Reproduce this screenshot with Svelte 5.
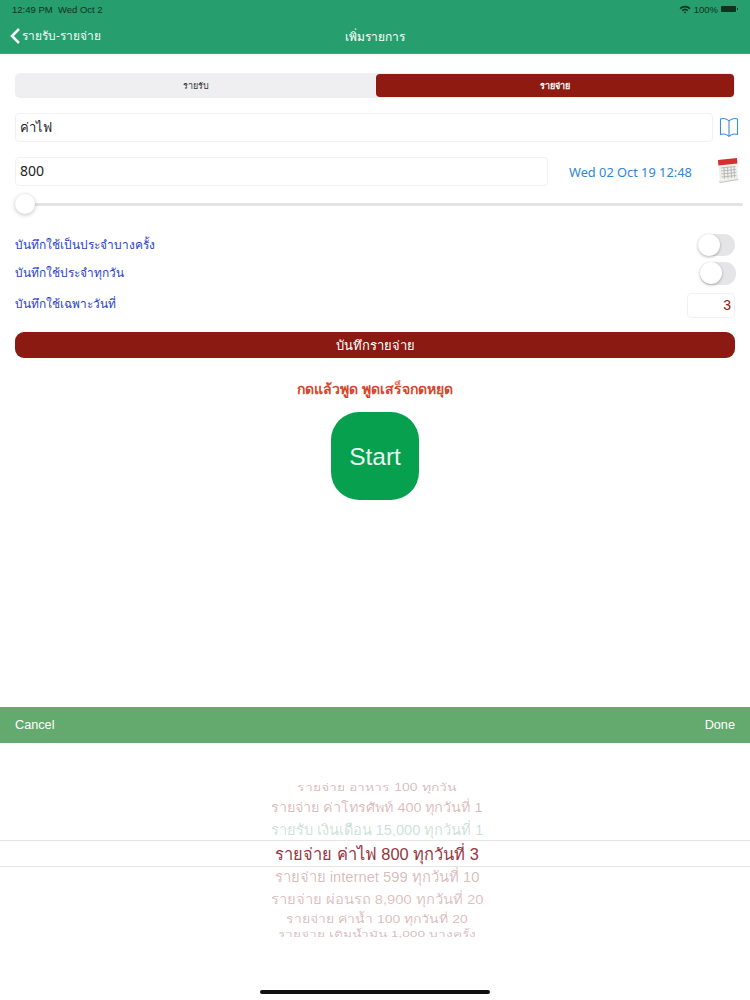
<script>
	let tab = $state('expense');

	const pickerRows = [
		{ text: 'รายจ่าย อาหาร 100 ทุกวัน', size: 14, squash: 0.75, tone: 'rgba(140, 30, 40, 0.32)', height: 16 },
		{ text: 'รายจ่าย ค่าโทรศัพท์ 400 ทุกวันที่ 1', size: 14.4, squash: 0.92, tone: 'rgba(140, 30, 40, 0.32)', height: 23 },
		{ text: 'รายรับ เงินเดือน 15,000 ทุกวันที่ 1', size: 14.6, squash: 1, tone: 'rgba(30, 120, 80, 0.24)', height: 22 },
		{ text: 'รายจ่าย ค่าไฟ 800 ทุกวันที่ 3', size: 16.4, squash: 1, tone: '#963540', height: 25 },
		{ text: 'รายจ่าย internet 599 ทุกวันที่ 10', size: 14.8, squash: 1, tone: 'rgba(140, 30, 40, 0.32)', height: 20 },
		{ text: 'รายจ่าย ผ่อนรถ 8,900 ทุกวันที่ 20', size: 14.8, squash: 0.92, tone: 'rgba(140, 30, 40, 0.3)', height: 24 },
		{ text: 'รายจ่าย ค่าน้ำ 100 ทุกวันที่ 20', size: 14, squash: 0.8, tone: 'rgba(140, 30, 40, 0.32)', height: 16 },
		{ text: 'รายจ่าย เติมน้ำมัน 1,000 บางครั้ง', size: 13.8, squash: 0.6, tone: 'rgba(140, 30, 40, 0.32)', height: 14 }
	];
</script>

<div class="screen">
	<header class="topbar">
		<div class="status">
			<span>12:49 PM &nbsp;Wed Oct 2</span>
			<span class="status-right">
				<svg width="12" height="9" viewBox="0 0 12 9" aria-hidden="true">
					<path d="M0.5 3 A8 8 0 0 1 11.5 3 L10.4 4.2 A6.4 6.4 0 0 0 1.6 4.2 Z" fill="#10311f" />
					<path d="M2.6 5.1 A5 5 0 0 1 9.4 5.1 L8.3 6.2 A3.4 3.4 0 0 0 3.7 6.2 Z" fill="#10311f" />
					<path d="M4.7 7.1 A2 2 0 0 1 7.3 7.1 L6 8.6 Z" fill="#10311f" />
				</svg>
				<span>100%</span>
				<span class="battery"></span>
			</span>
		</div>
		<nav class="navrow">
			<span class="back">
				<svg width="12" height="18" viewBox="0 0 12 18" aria-hidden="true">
					<path d="M10 2 L3 9 L10 16" fill="none" stroke="#fff" stroke-width="2.6" />
				</svg>
				รายรับ-รายจ่าย
			</span>
			<span class="title">เพิ่มรายการ</span>
		</nav>
	</header>

	<main class="form">
		<div class="segment">
			<button class:active={tab === 'income'} onclick={() => (tab = 'income')}>รายรับ</button>
			<button class:active={tab === 'expense'} onclick={() => (tab = 'expense')}>รายจ่าย</button>
		</div>

		<div class="name-row">
			<div class="field grow">ค่าไฟ</div>
			<svg class="book" width="20" height="21" viewBox="0 0 20 21" aria-hidden="true">
				<path d="M10 4 C8 1.5 4 1 1.5 2 V17.5 C4 16.5 8 17 10 19.5 C12 17 16 16.5 18.5 17.5 V2 C16 1 12 1.5 10 4 Z M10 4 V19.5" fill="none" stroke="#3f8fd6" stroke-width="1.1" />
			</svg>
		</div>

		<div class="amount-row">
			<div class="field amount">800</div>
			<span class="date">Wed 02 Oct 19 12:48</span>
			<svg class="calendar" width="22" height="26" viewBox="0 0 22 26" aria-hidden="true">
				<path d="M2 24 L21 21.5 L21.5 23 L3 26 Z" fill="#c4c4c4" />
				<path d="M1 3 L20 1 L21 22 L3 25 Z" fill="#efefed" />
				<path d="M1 3 L20 1 L20.3 6.5 L1.4 8.5 Z" fill="#d3302e" />
				<path d="M4 11 L18.5 9.5 M4 14 L19 12.5 M4.2 17 L19.2 15.5 M4.4 20 L19.4 18.5 M7 10.5 L7.5 22 M10.5 10 L11 21.5 M14 9.5 L14.5 21 M17 9.5 L17.5 20.5" stroke="#a8a8a8" stroke-width="0.7" fill="none" />
			</svg>
		</div>

		<div class="slider">
			<span class="thumb"></span>
		</div>

		<div class="options">
			<div class="option first">
				<span class="label">บันทึกใช้เป็นประจำบางครั้ง</span>
				<span class="switch"><span class="knob"></span></span>
			</div>
			<div class="option second">
				<span class="label">บันทึกใช้ประจำทุกวัน</span>
				<span class="switch nudged"><span class="knob"></span></span>
			</div>
			<div class="option third">
				<span class="label raised">บันทึกใช้เฉพาะวันที่</span>
				<span class="day">3</span>
			</div>
		</div>

		<button class="save">บันทึกรายจ่าย</button>
		<p class="hint">กดแล้วพูด พูดเสร็จกดหยุด</p>
		<button class="start">Start</button>
	</main>

	<div class="sheet-bar">
		<span>Cancel</span>
		<span>Done</span>
	</div>

	<section class="picker">
		<div class="wheel">
			{#each pickerRows as row, i}
				<div class="wheel-row" class:selected={i === 3} style="height: {row.height}px">
					<span style="font-size: {row.size}px; color: {row.tone}; transform: scaleY({row.squash})">{row.text}</span>
				</div>
			{/each}
		</div>
	</section>

	<div class="home-bar"></div>
</div>

<style>
	:global(body) {
		margin: 0;
		background: #fff;
	}

	.screen {
		width: 750px;
		height: 1000px;
		position: relative;
		overflow: hidden;
		display: flex;
		flex-direction: column;
		font-family: "Noto Sans", "DejaVu Sans", "Liberation Sans", sans-serif;
	}

	button {
		font-family: inherit;
		border: none;
		padding: 0;
	}

	.topbar {
		height: 54px;
		flex: none;
		background: #279e6d;
		border-bottom: 1px solid #4f9f78;
		box-sizing: border-box;
		color: #fff;
	}

	.status {
		height: 19px;
		padding: 0 12px 1px;
		box-sizing: border-box;
		display: flex;
		justify-content: space-between;
		align-items: center;
		font-family: "Liberation Sans", sans-serif;
		font-size: 9.5px;
		color: #10311f;
	}

	.status-right {
		display: flex;
		align-items: center;
		gap: 3px;
	}

	.battery {
		position: relative;
		width: 15px;
		height: 6px;
		margin-right: 2px;
		background: #10311f;
		border-radius: 1px;
	}

	.battery::after {
		content: "";
		position: absolute;
		right: -2px;
		top: 2px;
		width: 1px;
		height: 2px;
		background: #10311f;
	}

	.navrow {
		height: 34px;
		position: relative;
		display: flex;
		align-items: center;
		justify-content: center;
		font-size: 12px;
	}

	.back {
		position: absolute;
		left: 9px;
		top: 8px;
		display: flex;
		align-items: center;
		gap: 1px;
		line-height: 18px;
		opacity: 0.95;
	}

	.title {
		font-weight: 500;
	}

	.form {
		height: 653px;
		flex: none;
		box-sizing: border-box;
		padding: 19px 15px 0;
		display: flex;
		flex-direction: column;
	}

	.segment {
		height: 25px;
		flex: none;
		display: grid;
		grid-template-columns: 1fr 1fr;
		background: #efeff2;
		border-radius: 5px;
		padding: 1px;
		box-sizing: border-box;
	}

	.segment button {
		background: transparent;
		border-radius: 4px;
		font-size: 9px;
		color: #333;
	}

	.segment button.active {
		background: #8e1a12;
		color: #fff;
		font-weight: 600;
		margin-left: 1px;
	}

	.name-row,
	.amount-row {
		display: flex;
		align-items: center;
		margin-top: 15px;
	}

	.field {
		height: 29px;
		box-sizing: border-box;
		border: 1px solid #f1f1f3;
		border-radius: 4px;
		padding-left: 4px;
		line-height: 26px;
		font-size: 14px;
		color: #222;
	}

	.grow {
		flex: 1;
		font-size: 13px;
	}

	.book {
		margin-left: 6px;
		margin-right: -4px;
	}

	.amount {
		width: 533px;
	}

	.date {
		margin-left: 21px;
		font-size: 12.8px;
		color: #2f86d2;
		white-space: nowrap;
	}

	.calendar {
		margin-left: auto;
		margin-right: -4px;
		margin-top: -3px;
	}

	.slider {
		position: relative;
		height: 3px;
		margin-top: 17px;
		margin-right: -8px;
		background: #e4e4e6;
		border-radius: 2px;
	}

	.thumb {
		position: absolute;
		left: 0;
		top: -9px;
		width: 20px;
		height: 20px;
		border-radius: 50%;
		background: #fff;
		box-shadow: 0 1px 4px rgba(0, 0, 0, 0.25);
	}

	.options {
		margin-top: 28px;
		color: #2a43c8;
		font-size: 11.95px;
	}

	.option {
		display: flex;
		align-items: center;
		justify-content: space-between;
	}

	.label {
		padding-bottom: 2px;
	}

	.raised {
		padding-bottom: 5px;
	}

	.first {
		height: 22px;
	}

	.second {
		height: 23px;
		margin-top: 6px;
	}

	.third {
		height: 25px;
		margin-top: 8px;
	}

	.switch {
		position: relative;
		width: 37px;
		height: 22px;
		border-radius: 11px;
		background: #e5e5e8;
	}

	.nudged {
		width: 36px;
		height: 23px;
		margin-right: -1px;
	}

	.knob {
		position: absolute;
		left: 0;
		top: 0;
		width: 22px;
		height: 22px;
		border-radius: 50%;
		background: #fff;
		box-shadow: 0 1px 3px rgba(0, 0, 0, 0.3);
	}

	.day {
		width: 48px;
		height: 25px;
		box-sizing: border-box;
		border: 1px solid #f1f1f3;
		border-radius: 4px;
		padding-right: 3px;
		text-align: right;
		line-height: 23px;
		font-family: "Liberation Sans", sans-serif;
		font-size: 14px;
		color: #8e1a12;
	}

	.save {
		height: 26px;
		margin-top: 14px;
		flex: none;
		background: #8a1a12;
		border-radius: 9px;
		color: #fff;
		font-size: 13px;
	}

	.hint {
		margin: 21px 0 0;
		text-align: center;
		line-height: 20px;
		font-size: 14px;
		font-weight: 600;
		color: #d9452c;
	}

	.start {
		width: 88px;
		height: 88px;
		flex: none;
		align-self: center;
		margin-top: 13px;
		padding-top: 1px;
		border-radius: 28px;
		background: #07a04f;
		color: #e8f7ee;
		font-family: "Liberation Sans", sans-serif;
		font-size: 24.5px;
	}

	.sheet-bar {
		height: 36px;
		flex: none;
		padding: 0 15px;
		display: flex;
		align-items: center;
		justify-content: space-between;
		background: #64a96d;
		color: #fff;
		font-family: "Liberation Sans", sans-serif;
		font-size: 12.7px;
	}

	.picker {
		flex: 1;
		padding-top: 36px;
	}

	.wheel {
		display: flex;
		flex-direction: column;
		font-family: "Liberation Sans", "Noto Sans", sans-serif;
	}

	.wheel-row {
		display: flex;
		align-items: center;
		justify-content: center;
		padding-left: 4px;
		white-space: nowrap;
		overflow: hidden;
	}

	.wheel-row span {
		display: block;
	}

	.wheel-row.selected {
		border-top: 1px solid #e6e6e6;
		border-bottom: 1px solid #e6e6e6;
	}

	.home-bar {
		position: absolute;
		left: 260px;
		bottom: 6px;
		width: 230px;
		height: 4px;
		border-radius: 2px;
		background: #111;
	}
</style>
